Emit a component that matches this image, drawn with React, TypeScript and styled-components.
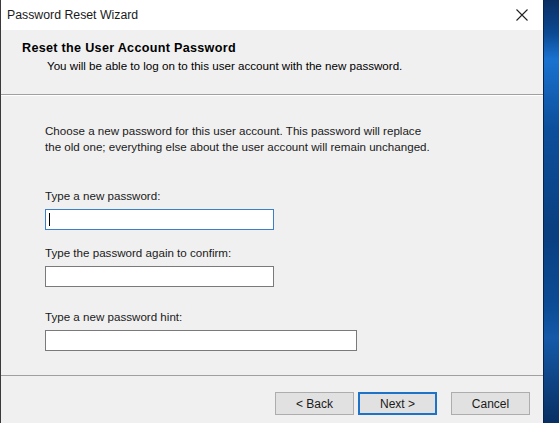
import React from "react";
import styled, { createGlobalStyle } from "styled-components";

const Global = createGlobalStyle`
  html, body {
    margin: 0;
    padding: 0;
    width: 559px;
    height: 423px;
    overflow: hidden;
    font-family: "Liberation Sans", Arial, sans-serif;
  }
`;

const Screen = styled.div`
  display: flex;
  width: 559px;
  height: 423px;
`;

const Window = styled.div`
  width: 543px;
  height: 423px;
  display: flex;
  flex-direction: column;
  background: #f0f0f0;
  border-left: 1px solid #3a3a3a;
  box-sizing: border-box;
  color: #000;
  font-size: 11.6px;
`;

const Desktop = styled.div`
  flex: 1;
  background: linear-gradient(
    180deg,
    #0b2f63 0%,
    #0c4a94 8%,
    #1a72d0 14%,
    #0d4f9c 30%,
    #0a3f80 55%,
    #0c4b95 72%,
    #1559a8 80%,
    #082f62 100%
  );
  border-left: 1px solid #06244d;
`;

const TitleBar = styled.div`
  height: 30px;
  flex-shrink: 0;
  background: #fff;
  display: flex;
  align-items: center;
  justify-content: space-between;
  padding: 0 6px;
  font-size: 12.3px;
  color: #1a1a1a;
`;

const CloseBtn = styled.div`
  width: 30px;
  height: 30px;
  display: flex;
  align-items: center;
  justify-content: center;
`;

const Header = styled.div`
  height: 65px;
  flex-shrink: 0;
  padding: 10px 0 0 21px;
  box-sizing: border-box;
  border-bottom: 1px solid #a0a0a0;
`;

const HeaderTitle = styled.div`
  font-weight: bold;
  font-size: 12.6px;
  letter-spacing: 0.3px;
  line-height: 16px;
`;

const HeaderSub = styled.div`
  padding-left: 25px;
  margin-top: 2px;
  line-height: 16px;
`;

const Body = styled.div`
  flex: 1;
  padding: 27px 0 0 44px;
  display: flex;
  flex-direction: column;
  border-top: 1px solid #fff;
`;

const Para = styled.p`
  margin: 0 0 33px;
  line-height: 16px;
  color: #1a1a1a;
`;

const Field = styled.div<{ $after: number }>`
  display: flex;
  flex-direction: column;
  margin-bottom: ${(p) => p.$after}px;
`;

const Label = styled.label`
  line-height: 16px;
  margin-bottom: 5px;
  color: #1a1a1a;
`;

const Input = styled.div<{ $w: number; $focus?: boolean }>`
  width: ${(p) => p.$w}px;
  height: 21px;
  box-sizing: border-box;
  background: #fff;
  border: 1px solid ${(p) => (p.$focus ? "#3c7fc8" : "#7a7a7a")};
  display: flex;
  align-items: center;
  padding-left: 3px;
`;

const Caret = styled.span`
  width: 1px;
  height: 13px;
  background: #000;
`;

const Footer = styled.div`
  height: 48px;
  flex-shrink: 0;
  border-top: 1px solid #a0a0a0;
  display: flex;
  align-items: flex-start;
  padding: 16px 0 0 274px;
  box-sizing: border-box;
`;

const Button = styled.div<{ $primary?: boolean; $gap?: number }>`
  width: 79px;
  height: 23px;
  box-sizing: border-box;
  margin-right: ${(p) => p.$gap ?? 0}px;
  background: #e1e1e1;
  border: ${(p) => (p.$primary ? "2px solid #1e73c8" : "1px solid #adadad")};
  display: flex;
  align-items: center;
  justify-content: center;
  font-size: 12px;
  color: #1a1a1a;
`;

export default function App() {
  return (
    <>
      <Global />
      <Screen>
        <Window>
          <TitleBar>
            <span>Password Reset Wizard</span>
            <CloseBtn>
              <svg width="12" height="12" viewBox="0 0 12 12">
                <path d="M0.5 0.5 L11.5 11.5 M11.5 0.5 L0.5 11.5" stroke="#222" strokeWidth="1.1" fill="none" />
              </svg>
            </CloseBtn>
          </TitleBar>
          <Header>
            <HeaderTitle>Reset the User Account Password</HeaderTitle>
            <HeaderSub>You will be able to log on to this user account with the new password.</HeaderSub>
          </Header>
          <Body>
            <Para>
              Choose a new password for this user account. This password will replace
              <br />
              the old one; everything else about the user account will remain unchanged.
            </Para>
            <Field $after={15}>
              <Label>Type a new password:</Label>
              <Input $w={229} $focus>
                <Caret />
              </Input>
            </Field>
            <Field $after={22}>
              <Label>Type the password again to confirm:</Label>
              <Input $w={229} />
            </Field>
            <Field $after={0}>
              <Label>Type a new password hint:</Label>
              <Input $w={312} />
            </Field>
          </Body>
          <Footer>
            <Button $gap={4}>&lt; Back</Button>
            <Button $primary $gap={14}>Next &gt;</Button>
            <Button>Cancel</Button>
          </Footer>
        </Window>
        <Desktop />
      </Screen>
    </>
  );
}
